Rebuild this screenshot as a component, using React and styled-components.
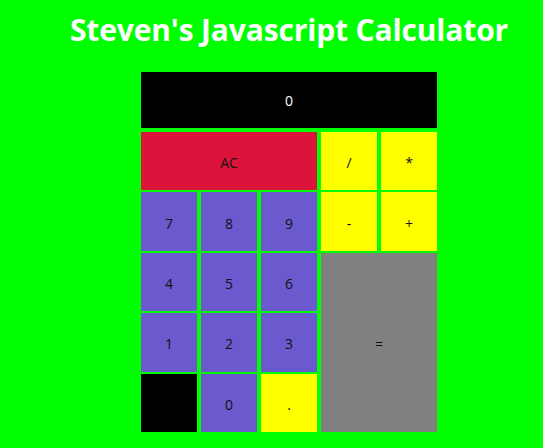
import React from "react";
import styled, { createGlobalStyle } from "styled-components";

const Global = createGlobalStyle`
  html, body {
    margin: 0;
    padding: 0;
    background: #00ff00;
  }
  body {
    font-family: "Open Sans", "Noto Sans", sans-serif;
  }
`;

const Page = styled.div`
  width: 543px;
  height: 448px;
  padding-left: 35px;
  box-sizing: border-box;
  display: flex;
  flex-direction: column;
  align-items: center;
  background: #00ff00;
  overflow: hidden;
`;

const Title = styled.h1`
  margin: 10px 0 0 0;
  font-family: "Open Sans", "Noto Sans", sans-serif;
  font-weight: 700;
  font-size: 30px;
  line-height: 40px;
  color: #ffffff;
  white-space: nowrap;
  letter-spacing: -0.15px;
`;

const Calculator = styled.div`
  margin-top: 22px;
  width: 296px;
  display: flex;
  flex-direction: column;
  gap: 4px;
`;

const Display = styled.div`
  height: 56px;
  background: #000000;
  color: #ffffff;
  display: flex;
  align-items: center;
  justify-content: center;
  font-size: 14px;
`;

const Keys = styled.div`
  display: grid;
  grid-template-columns: repeat(5, 56px);
  grid-template-rows: repeat(5, 1fr);
  column-gap: 4px;
  row-gap: 2px;
  height: 300px;
`;

const Key = styled.div`
  background: ${(p) => p.$bg};
  grid-column: ${(p) => (p.$cols ? `span ${p.$cols}` : "auto")};
  grid-row: ${(p) => (p.$rows ? `span ${p.$rows}` : "auto")};
  color: #111;
  font-size: 14px;
  display: flex;
  align-items: center;
  justify-content: center;
  padding-top: 3px;
  box-sizing: border-box;
`;

const PURPLE = "#6a5acd";
const YELLOW = "#ffff00";
const RED = "#dc143c";
const GRAY = "#808080";

export default function App() {
  return (
    <>
      <Global />
      <Page>
        <Title>Steven's Javascript Calculator</Title>
        <Calculator>
          <Display>0</Display>
          <Keys>
            <Key $bg={RED} $cols={3}>AC</Key>
            <Key $bg={YELLOW}>/</Key>
            <Key $bg={YELLOW}>*</Key>
            <Key $bg={PURPLE}>7</Key>
            <Key $bg={PURPLE}>8</Key>
            <Key $bg={PURPLE}>9</Key>
            <Key $bg={YELLOW}>-</Key>
            <Key $bg={YELLOW}>+</Key>
            <Key $bg={PURPLE}>4</Key>
            <Key $bg={PURPLE}>5</Key>
            <Key $bg={PURPLE}>6</Key>
            <Key $bg={GRAY} $cols={2} $rows={3}>=</Key>
            <Key $bg={PURPLE}>1</Key>
            <Key $bg={PURPLE}>2</Key>
            <Key $bg={PURPLE}>3</Key>
            <Key $bg="#000000"></Key>
            <Key $bg={PURPLE}>0</Key>
            <Key $bg={YELLOW}>.</Key>
          </Keys>
        </Calculator>
      </Page>
    </>
  );
}
